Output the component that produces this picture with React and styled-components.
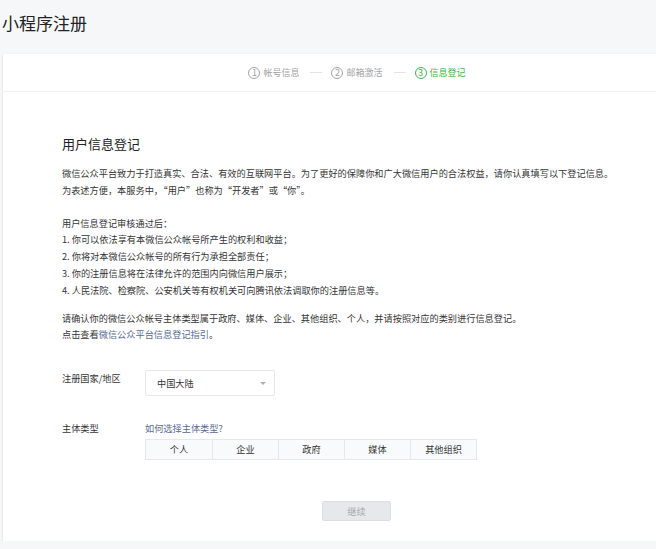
import styled, {createGlobalStyle} from "styled-components"

const GlobalStyle = createGlobalStyle`
    html, body {
        margin: 0;
        padding: 0;
        overflow: hidden;
        background: #f6f7f9;
    }
    body {
        font-family: "Noto Sans CJK SC", "Noto Sans", sans-serif;
        color: #353535;
    }
`

const Page = styled.div`
    padding: 0 0 0 3px;
    width: 708px;
`

const Title = styled.h1`
    margin: 0 0 0 -1px;
    height: 54px;
    display: flex;
    align-items: center;
    padding-bottom: 10px;
    box-sizing: border-box;
    font-size: 17px;
    font-weight: normal;
    color: #222;
`

const Card = styled.div`
    background: #fff;
    box-shadow: 0 1px 2px rgba(150, 150, 150, 0.35);
    height: 487px;
    display: flex;
    flex-direction: column;
`

const Steps = styled.ol`
    margin: 0;
    padding: 0;
    list-style: none;
    height: 38px;
    border-bottom: 1px solid #f0f1f3;
    box-sizing: border-box;
    display: flex;
    align-items: center;
    justify-content: center;
    font-size: 9px;
`

const Step = styled.li`
    display: flex;
    align-items: center;
    gap: 3px;
    color: ${p => (p.$active ? "#44b549" : "#a3a3a3")};
`

const StepNum = styled.span`
    width: 12px;
    height: 12px;
    border: 1px solid currentColor;
    border-radius: 50%;
    box-sizing: border-box;
    display: flex;
    align-items: center;
    justify-content: center;
    font-size: 9px;
    line-height: 1;
`

const StepLine = styled.span`
    width: 12px;
    height: 1px;
    background: #e4e5e8;
    margin: 0 9px 0 11px;
`

const Body = styled.div`
    padding: 43px 0 0 59px;
    display: flex;
    flex-direction: column;
    flex: 1;
`

const Heading = styled.h2`
    margin: 0 0 12px;
    font-size: 13px;
    line-height: 18px;
    font-weight: normal;
    color: #222;
`

const Para = styled.p`
    margin: 0 0 ${p => p.$gap ?? 16}px;
    font-size: 9.2px;
    line-height: 16.8px;
`

const Link = styled.a`
    color: #576b95;
    text-decoration: none;
    line-height: 16.8px;
`

const FormRow = styled.div`
    display: flex;
    margin-top: ${p => p.$top || 0}px;
`

const Label = styled.div`
    width: 83px;
    flex-shrink: 0;
    font-size: 9.2px;
    line-height: 17px;
`

const Field = styled.div`
    display: flex;
    flex-direction: column;
    gap: 2px;
    font-size: 9.2px;
`

const Select = styled.div`
    width: 130px;
    height: 26px;
    border: 1px solid #e7e7eb;
    box-sizing: border-box;
    display: flex;
    align-items: center;
    justify-content: space-between;
    padding: 0 8px 0 11px;
    border-radius: 2px;
    font-size: 9.2px;
`

const Caret = styled.span`
    width: 0;
    height: 0;
    border-left: 3px solid transparent;
    border-right: 3px solid transparent;
    border-top: 3px solid #b0b0b0;
`

const TypeTable = styled.div`
    display: grid;
    grid-template-columns: repeat(5, 66px);
    border: 1px solid #e7e7eb;
    width: fit-content;
    background: #f9fafb;
`

const TypeCell = styled.div`
    height: 19px;
    display: flex;
    align-items: center;
    justify-content: center;
    font-size: 9.2px;
    color: #353535;
    border-left: ${p => (p.$first ? "none" : "1px solid #e7e7eb")};
`

const Actions = styled.div`
    display: flex;
    padding-left: 260px;
    margin-top: 41px;
`

const Button = styled.button`
    width: 69px;
    height: 20px;
    border: 1px solid #dedfe3;
    border-radius: 2px;
    background: #e7e8ec;
    color: #a9a9ad;
    font-family: inherit;
    font-size: 9.2px;
    padding: 0;
`

const steps = ["帐号信息", "邮箱激活", "信息登记"]
const types = ["个人", "企业", "政府", "媒体", "其他组织"]

const App = () => {
    return (
        <Page>
            <GlobalStyle />
            <Title>小程序注册</Title>
            <Card>
                <Steps>
                    {steps.map((s, i) => [
                        i > 0 && <StepLine key={"l" + i} />,
                        <Step key={s} $active={i === 2}>
                            <StepNum>{i + 1}</StepNum>
                            {s}
                        </Step>,
                    ])}
                </Steps>
                <Body>
                    <Heading>用户信息登记</Heading>
                    <Para>
                        微信公众平台致力于打造真实、合法、有效的互联网平台。为了更好的保障你和广大微信用户的合法权益，请你认真填写以下登记信息。
                        <br />
                        为表述方便，本服务中，“用户”也称为“开发者”或“你”。
                    </Para>
                    <Para $gap={11}>
                        用户信息登记审核通过后：
                        <br />
                        1. 你可以依法享有本微信公众帐号所产生的权利和收益；
                        <br />
                        2. 你将对本微信公众帐号的所有行为承担全部责任；
                        <br />
                        3. 你的注册信息将在法律允许的范围内向微信用户展示；
                        <br />
                        4. 人民法院、检察院、公安机关等有权机关可向腾讯依法调取你的注册信息等。
                    </Para>
                    <Para $gap={0}>
                        请确认你的微信公众帐号主体类型属于政府、媒体、企业、其他组织、个人，并请按照对应的类别进行信息登记。
                        <br />
                        点击查看<Link href="#">微信公众平台信息登记指引</Link>。
                    </Para>
                    <FormRow $top={27}>
                        <Label>注册国家/地区</Label>
                        <Select>
                            中国大陆
                            <Caret />
                        </Select>
                    </FormRow>
                    <FormRow $top={24}>
                        <Label>主体类型</Label>
                        <Field>
                            <Link href="#">如何选择主体类型?</Link>
                            <TypeTable>
                                {types.map((t, i) => (
                                    <TypeCell key={t} $first={i === 0}>{t}</TypeCell>
                                ))}
                            </TypeTable>
                        </Field>
                    </FormRow>
                    <Actions>
                        <Button disabled>继续</Button>
                    </Actions>
                </Body>
            </Card>
        </Page>
    )
}

export default App
